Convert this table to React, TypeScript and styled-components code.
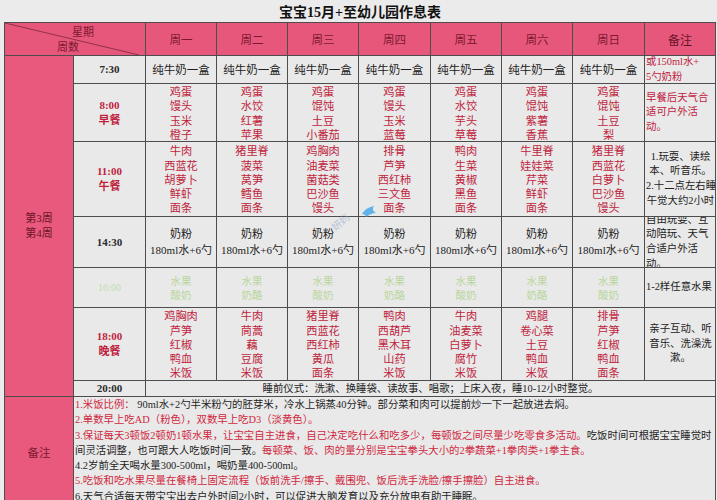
import styled, { createGlobalStyle } from 'styled-components'

const GlobalStyle = createGlobalStyle`
  html, body {
    margin: 0;
    padding: 0;
    background: #ebebeb;
  }
  body {
    font-family: "Noto Sans CJK SC", "Noto Sans", sans-serif;
  }
`

const Page = styled.div`
  position: relative;
  width: 717px;
  height: 500px;
  overflow: hidden;
  padding-left: 4px;
  box-sizing: border-box;
`

const Title = styled.h1`
  margin: 0;
  width: 712px;
  height: 22px;
  display: flex;
  align-items: center;
  justify-content: center;
  font-family: "Liberation Serif", "Noto Sans CJK SC", serif;
  font-size: 14px;
  font-weight: bold;
  color: #111;
`

const Sheet = styled.div`
  display: grid;
  grid-template-columns: 68px 71px 70px 70px 70px 71px 70px 70px 71px 70px;
  grid-template-rows: 32px 27px 57px 74px 50px 39px 72px 15px 110px;
  gap: 1px;
  width: max-content;
  background: #4d4d4d;
  border: 1px solid #4d4d4d;
`

type Tone = 'head' | 'week' | 'plain'

const tones: Record<Tone, string> = {
  head: '#e6577b',
  week: '#e8597d',
  plain: '#e9e9e9'
}

const Cell = styled.div<{ $tone?: Tone; $col?: string; $row?: string; $left?: boolean }>`
  grid-column: ${(p) => p.$col ?? 'auto'};
  grid-row: ${(p) => p.$row ?? 'auto'};
  position: relative;
  background: ${(p) => tones[p.$tone ?? 'plain']};
  display: flex;
  flex-direction: column;
  justify-content: center;
  align-items: ${(p) => (p.$left ? 'flex-start' : 'center')};
  text-align: ${(p) => (p.$left ? 'left' : 'center')};
  overflow: hidden;
  white-space: nowrap;
`

const Diagonal = styled.svg`
  position: absolute;
  inset: 0;
  width: 100%;
  height: 100%;
`

const DiagLabel = styled.span<{ $indent: number }>`
  margin-left: ${(p) => p.$indent}px;
  font-size: 11px;
  line-height: 15px;
  color: #7d1831;
`

const HeadLabel = styled.span<{ $strong?: boolean }>`
  font-size: ${(p) => (p.$strong ? '12px' : '11.5px')};
  color: ${(p) => (p.$strong ? '#6a1127' : '#7d1831')};
`

const WeekLabel = styled.div`
  font-family: "Liberation Serif", "Noto Sans CJK SC", serif;
  font-size: 11px;
  line-height: 15px;
  color: #6e1429;
`

const TimeLabel = styled.div<{ $color: string; $faint?: boolean }>`
  font-family: "Liberation Serif", "Noto Sans CJK SC", serif;
  font-weight: ${(p) => (p.$faint ? 'normal' : 'bold')};
  font-size: ${(p) => (p.$faint ? '10px' : '11px')};
  line-height: 15px;
  color: ${(p) => p.$color};
`

const Food = styled.div`
  font-size: 11.2px;
  line-height: 14.2px;
  color: #bf1f3d;
`

const Plain = styled.div`
  font-size: 11.5px;
  line-height: 15px;
  color: #222;
`

const Milk = styled.div`
  font-family: "Liberation Serif", "Noto Sans CJK SC", serif;
  font-size: 11px;
  line-height: 16px;
  color: #222;
`

const Snack = styled.div`
  font-size: 10.5px;
  line-height: 14px;
  color: #b9d69d;
`

const Note = styled.div<{ $red?: boolean; $center?: boolean }>`
  align-self: stretch;
  padding-left: 1px;
  font-family: "Liberation Serif", "Noto Sans CJK SC", serif;
  font-size: 10.4px;
  line-height: 14.6px;
  text-align: ${(p) => (p.$center ? 'center' : 'left')};
  color: ${(p) => (p.$red ? '#c0213e' : '#222')};
`

const Bedtime = styled.div`
  font-family: "Liberation Serif", "Noto Sans CJK SC", serif;
  font-size: 10.4px;
  line-height: 15px;
  color: #1e1e1e;
`

const Remarks = styled.div`
  align-self: stretch;
  flex: 1;
  padding-left: 1px;
  font-family: "Liberation Serif", "Noto Sans CJK SC", serif;
  font-size: 10.4px;
  line-height: 15.3px;
  color: #1e1e1e;
`

const Red = styled.span`
  color: #d0283f;
`

const Watermark = styled.div`
  position: absolute;
  left: 330px;
  top: 214px;
  font-size: 10px;
  color: rgba(140, 160, 200, 0.55);
  transform: rotate(-38deg);
`

const Bird = styled.svg`
  position: absolute;
  left: 361px;
  top: 205px;
`

const days = ['周一', '周二', '周三', '周四', '周五', '周六', '周日']

const breakfast = [
  ['鸡蛋', '馒头', '玉米', '橙子'],
  ['鸡蛋', '水饺', '红薯', '苹果'],
  ['鸡蛋', '馄饨', '土豆', '小番茄'],
  ['鸡蛋', '馒头', '玉米', '蓝莓'],
  ['鸡蛋', '水饺', '芋头', '草莓'],
  ['鸡蛋', '馄饨', '紫薯', '香蕉'],
  ['鸡蛋', '馄饨', '土豆', '梨']
]

const lunch = [
  ['牛肉', '西蓝花', '胡萝卜', '鲜虾', '面条'],
  ['猪里脊', '菠菜', '莴笋', '鳕鱼', '面条'],
  ['鸡胸肉', '油麦菜', '菌菇类', '巴沙鱼', '馒头'],
  ['排骨', '芦笋', '西红柿', '三文鱼', '面条'],
  ['鸭肉', '生菜', '黄椒', '黑鱼', '面条'],
  ['牛里脊', '娃娃菜', '芹菜', '鲜虾', '面条'],
  ['猪里脊', '西蓝花', '白萝卜', '巴沙鱼', '馒头']
]

const snacks = ['酸奶', '奶酪', '酸奶', '奶酪', '酸奶', '奶酪', '酸奶']

const dinner = [
  ['鸡胸肉', '芦笋', '红椒', '鸭血', '米饭'],
  ['牛肉', '茼蒿', '藕', '豆腐', '米饭'],
  ['猪里脊', '西蓝花', '西红柿', '黄瓜', '面条'],
  ['鸭肉', '西葫芦', '黑木耳', '山药', '米饭'],
  ['牛肉', '油麦菜', '白萝卜', '腐竹', '米饭'],
  ['鸡腿', '卷心菜', '土豆', '鸭血', '米饭'],
  ['排骨', '芦笋', '红椒', '鸭血', '面条']
]

const Lines = ({ items }: { items: string[] }) => (
  <>
    {items.map((t, i) => (
      <div key={i}>{t}</div>
    ))}
  </>
)

export default function App() {
  return (
    <Page>
      <GlobalStyle />
      <Title>宝宝15月+至幼儿园作息表</Title>
      <Sheet>
        <Cell $tone="head" $col="1 / 3" $left>
          <Diagonal viewBox="0 0 140 32" preserveAspectRatio="none">
            <line x1="0" y1="0" x2="134" y2="32" stroke="#7a2a40" strokeWidth="0.8" />
          </Diagonal>
          <DiagLabel $indent={67}>星期</DiagLabel>
          <DiagLabel $indent={52}>周数</DiagLabel>
        </Cell>
        {days.map((d) => (
          <Cell key={d} $tone="head">
            <HeadLabel>{d}</HeadLabel>
          </Cell>
        ))}
        <Cell $tone="head">
          <HeadLabel $strong>备注</HeadLabel>
        </Cell>

        <Cell $tone="week" $col="1" $row="2 / 9">
          <WeekLabel>第3周</WeekLabel>
          <WeekLabel>第4周</WeekLabel>
        </Cell>

        <Cell>
          <TimeLabel $color="#2a2a2a">7:30</TimeLabel>
        </Cell>
        {days.map((d) => (
          <Cell key={d}>
            <Plain>纯牛奶一盒</Plain>
          </Cell>
        ))}
        <Cell $left>
          <Note $red>
            或150ml水+
            <br />
            5勺奶粉
          </Note>
        </Cell>

        <Cell>
          <TimeLabel $color="#bf1f3d">8:00</TimeLabel>
          <TimeLabel $color="#bf1f3d">早餐</TimeLabel>
        </Cell>
        {breakfast.map((items, i) => (
          <Cell key={i}>
            <Food>
              <Lines items={items} />
            </Food>
          </Cell>
        ))}
        <Cell $left>
          <Note $red>
            早餐后天气合
            <br />
            适可户外活
            <br />
            动。
          </Note>
        </Cell>

        <Cell>
          <TimeLabel $color="#bf1f3d">11:00</TimeLabel>
          <TimeLabel $color="#bf1f3d">午餐</TimeLabel>
        </Cell>
        {lunch.map((items, i) => (
          <Cell key={i}>
            <Food>
              <Lines items={items} />
            </Food>
          </Cell>
        ))}
        <Cell $left>
          <Note $center>
            1.玩耍、读绘
            <br />
            本、听音乐。
            <br />
            2.十二点左右睡
            <br />
            午觉大约2小时
          </Note>
        </Cell>

        <Cell>
          <TimeLabel $color="#2a2a2a">14:30</TimeLabel>
        </Cell>
        {days.map((d) => (
          <Cell key={d}>
            <Milk>奶粉</Milk>
            <Milk>180ml水+6勺</Milk>
          </Cell>
        ))}
        <Cell $left>
          <Note>
            自由玩耍、互
            <br />
            动陪玩、天气
            <br />
            合适户外活
            <br />
            动。
          </Note>
        </Cell>

        <Cell>
          <TimeLabel $color="#c4dcae" $faint>
            16:00
          </TimeLabel>
        </Cell>
        {snacks.map((s, i) => (
          <Cell key={i}>
            <Snack>水果</Snack>
            <Snack>{s}</Snack>
          </Cell>
        ))}
        <Cell $left>
          <Note>1-2样任意水果</Note>
        </Cell>

        <Cell>
          <TimeLabel $color="#bf1f3d">18:00</TimeLabel>
          <TimeLabel $color="#bf1f3d">晚餐</TimeLabel>
        </Cell>
        {dinner.map((items, i) => (
          <Cell key={i}>
            <Food>
              <Lines items={items} />
            </Food>
          </Cell>
        ))}
        <Cell>
          <Note $center>
            亲子互动、听
            <br />
            音乐、洗澡洗
            <br />
            漱。
          </Note>
        </Cell>

        <Cell>
          <TimeLabel $color="#2a2a2a">20:00</TimeLabel>
        </Cell>
        <Cell $col="3 / 11">
          <Bedtime>睡前仪式：洗漱、换睡袋、读故事、唱歌；上床入夜，睡10-12小时整觉。</Bedtime>
        </Cell>

        <Cell $tone="week">
          <HeadLabel>备注</HeadLabel>
        </Cell>
        <Cell $col="2 / 11" $left>
          <Remarks>
            <div>
              <Red>1.米饭比例：</Red> 90ml水+2勺半米粉勺的胚芽米，冷水上锅蒸40分钟。部分菜和肉可以提前炒一下一起放进去焖。
            </div>
            <div>
              <Red>2.单数早上吃AD（粉色），双数早上吃D3（淡黄色）。</Red>
            </div>
            <div>
              <Red>3.保证每天3顿饭2顿奶1顿水果，让宝宝自主进食，自己决定吃什么和吃多少，每顿饭之间尽量少吃零食多活动。</Red>
              吃饭时间可根据宝宝睡觉时
            </div>
            <div>
              间灵活调整，也可跟大人吃饭时间一致。
              <Red>每顿菜、饭、肉的量分别是宝宝拳头大小的2拳蔬菜+1拳肉类+1拳主食。</Red>
            </div>
            <div>4.2岁前全天喝水量300-500ml，喝奶量400-500ml。</div>
            <div>
              <Red>5.吃饭和吃水果尽量在餐椅上固定流程（饭前洗手/擦手、戴围兜、饭后洗手洗脸/擦手擦脸）自主进食。</Red>
            </div>
            <div>6.天气合适每天带宝宝出去户外时间2小时，可以促进大脑发育以及充分放电有助于睡眠。</div>
          </Remarks>
        </Cell>
      </Sheet>

      <Watermark>妍妈</Watermark>
      <Bird width="16" height="13" viewBox="0 0 16 13">
        <path d="M1 9 C4 4 8 2 13 1 C11 4 12 6 15 8 C11 8 8 10 5 12 C5 10 3 9 1 9 Z" fill="#5fb3e6" />
      </Bird>
    </Page>
  )
}
